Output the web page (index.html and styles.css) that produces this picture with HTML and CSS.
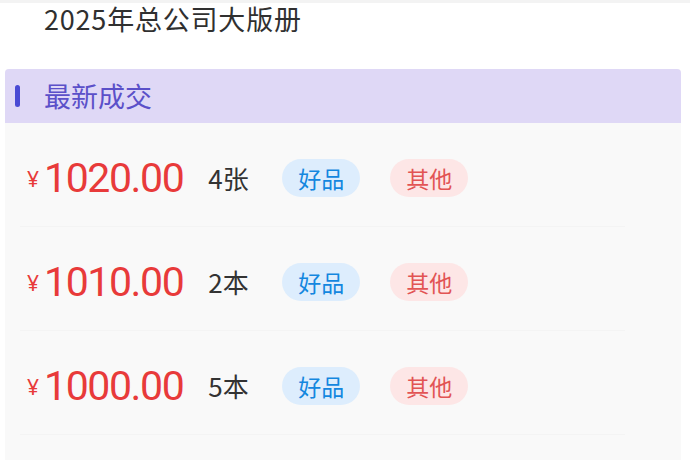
FILE: index.html
```html
<!DOCTYPE html>
<html lang="zh-CN">
<head>
<meta charset="utf-8">
<link rel="stylesheet" href="styles.css">
</head>
<body>
<div class="page">
  <div class="topbar">
    <h1 class="title">2025年总公司大版册</h1>
  </div>
  <section class="card">
    <div class="card-head">
      <span class="bar"></span>
      <span class="head-text">最新成交</span>
    </div>
    <div class="list">
      <div class="row">
        <div class="price"><span class="yen">¥</span><span class="num">1020.00</span></div>
        <span class="qty">4张</span>
        <span class="tag tag-good">好品</span>
        <span class="tag tag-other">其他</span>
      </div>
      <div class="row">
        <div class="price"><span class="yen">¥</span><span class="num">1010.00</span></div>
        <span class="qty">2本</span>
        <span class="tag tag-good">好品</span>
        <span class="tag tag-other">其他</span>
      </div>
      <div class="row">
        <div class="price"><span class="yen">¥</span><span class="num">1000.00</span></div>
        <span class="qty">5本</span>
        <span class="tag tag-good">好品</span>
        <span class="tag tag-other">其他</span>
      </div>
    </div>
  </section>
</div>
</body>
</html>
```

FILE: styles.css
```css
* { box-sizing: border-box; margin: 0; padding: 0; }
html, body {
  width: 690px;
  height: 460px;
  overflow: hidden;
  background: #ffffff;
}
body {
  font-family: "Noto Sans CJK SC", "Noto Sans", sans-serif;
  color: #333333;
}
.page {
  display: flex;
  flex-direction: column;
}
.topbar {
  height: 69px;
  border-top: 3px solid #f3f3f3;
  padding-left: 44px;
}
.title {
  font-size: 27px;
  font-weight: 400;
  line-height: 32px;
  letter-spacing: 0.8px;
  color: #303030;
}
.card {
  margin-left: 5px;
  width: 676px;
  background: #f9f9f9;
  border-radius: 4px 4px 0 0;
  height: 400px;
}
.card-head {
  height: 54px;
  background: #dfd8f6;
  border-radius: 4px 4px 0 0;
  display: flex;
  align-items: center;
  padding-left: 10px;
}
.bar {
  width: 5px;
  height: 22px;
  border-radius: 3px;
  background: #4a4ad4;
}
.head-text {
  margin-left: 24px;
  font-size: 27px;
  line-height: 30px;
  color: #5b50c9;
}
.list {
  display: flex;
  flex-direction: column;
}
.row {
  height: 104px;
  padding-top: 6px;
  margin-left: 15px;
  margin-right: 56px;
  padding-left: 7px;
  display: flex;
  align-items: center;
  border-bottom: 1px solid #f4f4f4;
}
.price {
  display: flex;
  align-items: center;
  color: #e83a3a;
}
.yen {
  font-family: "Noto Sans", sans-serif;
  font-size: 21px;
  line-height: 20px;
  margin-right: 5px;
  margin-top: 2px;
}
.num {
  font-family: Roboto, sans-serif;
  font-size: 41px;
  line-height: 44px;
  letter-spacing: -1.4px;
}
.qty {
  margin-left: 25px;
  font-size: 26px;
  line-height: 30px;
  color: #333333;
  width: 44px;
}
.tag {
  margin-left: 30px;
  height: 38px;
  padding: 0 16px;
  border-radius: 19px;
  font-size: 23px;
  line-height: 38px;
}
.tag-good {
  background: #ddedfd;
  color: #1487df;
}
.tag-other {
  background: #fde6e6;
  color: #e25454;
}
```
